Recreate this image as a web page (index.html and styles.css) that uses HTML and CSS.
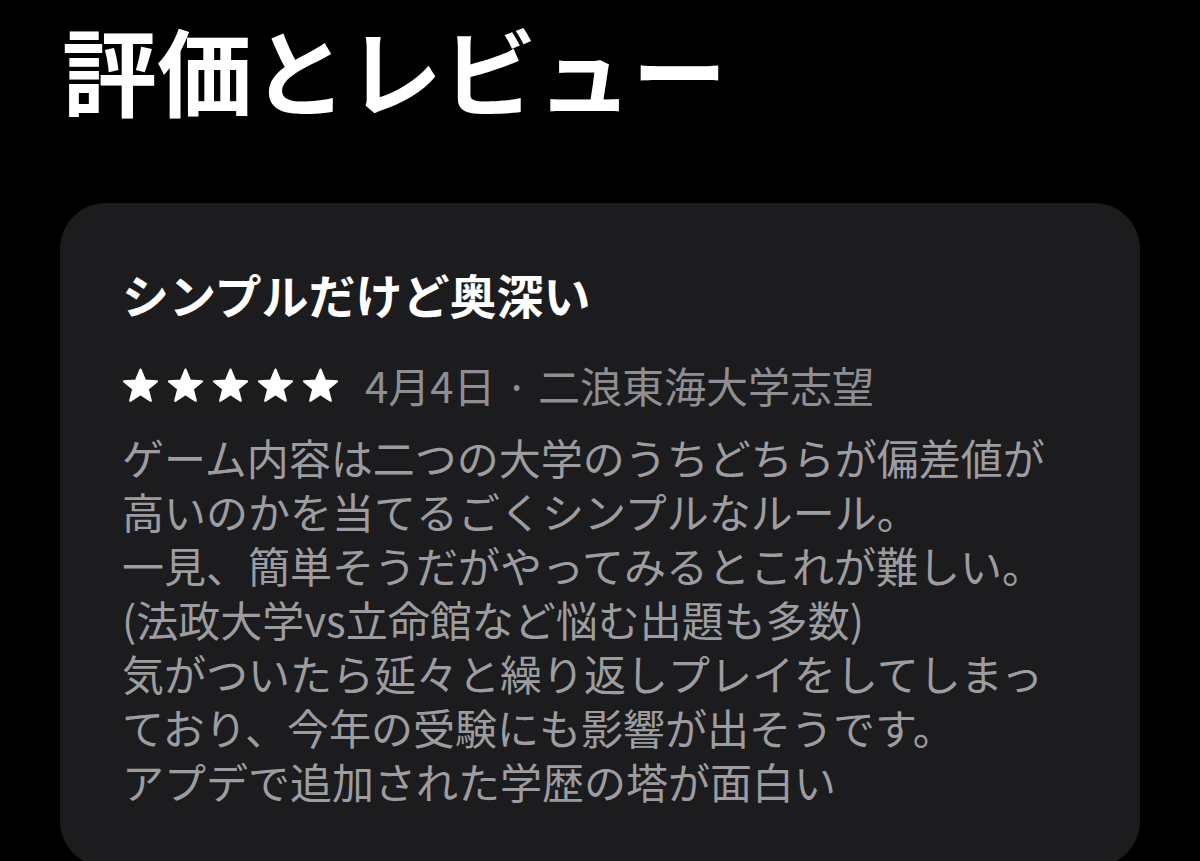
FILE: index.html
```html
<!DOCTYPE html>
<html lang="ja">
<head>
<meta charset="utf-8">
<link rel="stylesheet" href="styles.css">
</head>
<body>
<main class="page">
  <h1 class="heading">評価とレビュー</h1>
  <section class="card">
    <h2 class="review-title">シンプルだけど奥深い</h2>
    <div class="meta">
      <div class="stars">
        <svg class="star" viewBox="0 0 36 34"><path d="M18 1.5 L22.4 12.2 L34 12.9 L25 20.4 L28 31.8 L18 25.4 L8 31.8 L11 20.4 L2 12.9 L13.6 12.2 Z"/></svg>
        <svg class="star" viewBox="0 0 36 34"><path d="M18 1.5 L22.4 12.2 L34 12.9 L25 20.4 L28 31.8 L18 25.4 L8 31.8 L11 20.4 L2 12.9 L13.6 12.2 Z"/></svg>
        <svg class="star" viewBox="0 0 36 34"><path d="M18 1.5 L22.4 12.2 L34 12.9 L25 20.4 L28 31.8 L18 25.4 L8 31.8 L11 20.4 L2 12.9 L13.6 12.2 Z"/></svg>
        <svg class="star" viewBox="0 0 36 34"><path d="M18 1.5 L22.4 12.2 L34 12.9 L25 20.4 L28 31.8 L18 25.4 L8 31.8 L11 20.4 L2 12.9 L13.6 12.2 Z"/></svg>
        <svg class="star" viewBox="0 0 36 34"><path d="M18 1.5 L22.4 12.2 L34 12.9 L25 20.4 L28 31.8 L18 25.4 L8 31.8 L11 20.4 L2 12.9 L13.6 12.2 Z"/></svg>
      </div>
      <span class="date">4月4日 · 二浪東海大学志望</span>
    </div>
    <p class="body">ゲーム内容は二つの大学のうちどちらが偏差値が<br>高いのかを当てるごくシンプルなルール。<br>一見、簡単そうだがやってみるとこれが難しい。<br>(法政大学vs立命館など悩む出題も多数)<br>気がついたら延々と繰り返しプレイをしてしまっ<br>ており、今年の受験にも影響が出そうです。<br>アプデで追加された学歴の塔が面白い</p>
  </section>
</main>
</body>
</html>
```
FILE: styles.css
```css
html, body {
  margin: 0;
  padding: 0;
  background: #000;
  height: 100%;
  overflow: hidden;
}
.page {
  font-family: "Noto Sans CJK JP", "Noto Sans", sans-serif;
  padding: 11px 60px 0 60px;
}
.heading {
  margin: 0;
  padding-left: 2px;
  font-size: 95px;
  line-height: 115px;
  font-weight: 700;
  color: #fff;
  letter-spacing: 0;
}
.card {
  margin-top: 77px;
  background: #1c1c1e;
  border-radius: 46px;
  height: 664px;
  box-sizing: border-box;
  padding: 63px 50px 0 62px;
}
.review-title {
  margin: 0;
  font-size: 47px;
  line-height: 56px;
  font-weight: 700;
  color: #fff;
}
.meta {
  margin-top: 38px;
  display: flex;
  align-items: center;
  height: 50px;
  gap: 26px;
}
.stars {
  display: flex;
  gap: 8px;
}
.star {
  width: 37px;
  height: 35px;
  fill: #fff;
  stroke: #fff;
  stroke-width: 2.2;
  stroke-linejoin: round;
}
.date {
  font-size: 42px;
  color: #8e8e93;
  line-height: 50px;
}
.body {
  margin: 20px 0 0 0;
  font-size: 42px;
  line-height: 54px;
  color: #9c9ca1;
}
```
